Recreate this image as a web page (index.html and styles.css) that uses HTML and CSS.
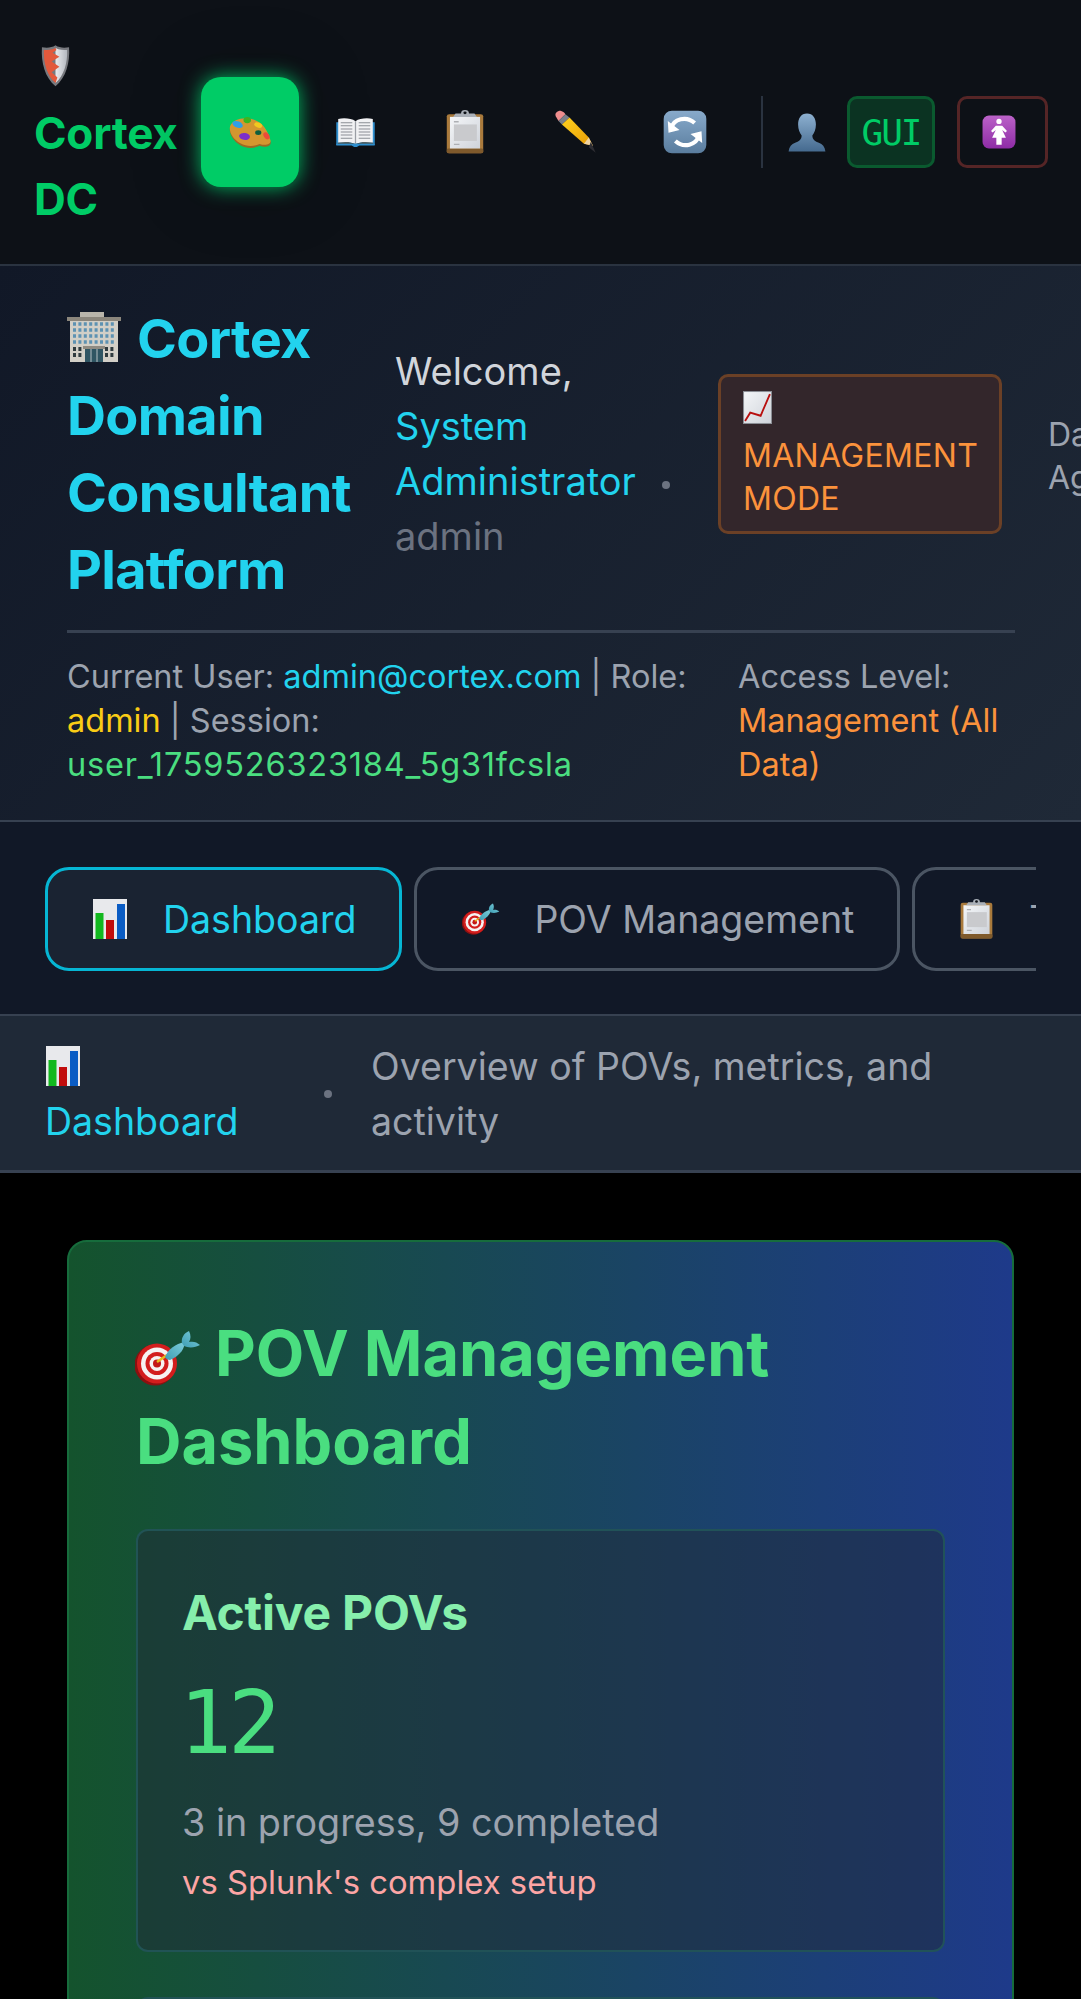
FILE: index.html
```html
<!DOCTYPE html>
<html lang="en">
<head>
<meta charset="utf-8">
<title>Cortex DC</title>
<link rel="stylesheet" href="styles.css">
</head>
<body>
<svg class="sprites" width="0" height="0" aria-hidden="true">
  <defs>
    <linearGradient id="gPaper" x1="0" y1="0" x2="1" y2="1"><stop offset="0" stop-color="#f4f6f8"/><stop offset="1" stop-color="#cfd3da"/></linearGradient>
    <linearGradient id="gSteel" x1="0" y1="0" x2="1" y2="0"><stop offset="0" stop-color="#e9ebee"/><stop offset="1" stop-color="#b4b8bf"/></linearGradient>
    <linearGradient id="gBlue" x1="0" y1="0" x2="0" y2="1"><stop offset="0" stop-color="#88aacb"/><stop offset="1" stop-color="#5a7d9e"/></linearGradient>
    <linearGradient id="gBust" x1="0" y1="0" x2="0" y2="1"><stop offset="0" stop-color="#8db0d0"/><stop offset="1" stop-color="#456a8f"/></linearGradient>
    <linearGradient id="gPurple" x1="0" y1="0" x2="0" y2="1"><stop offset="0" stop-color="#bb62c8"/><stop offset="1" stop-color="#8e2ca6"/></linearGradient>
    <linearGradient id="gPencil" x1="0" y1="0" x2="1" y2="1"><stop offset="0" stop-color="#ffd21f"/><stop offset="1" stop-color="#e79a05"/></linearGradient>
    <linearGradient id="gDart" x1="0" y1="1" x2="1" y2="0"><stop offset="0" stop-color="#3d9db4"/><stop offset="1" stop-color="#7dcdda"/></linearGradient>

    <symbol id="i-shield" viewBox="0 0 64 64" preserveAspectRatio="none">
      <path d="M32 2 C40 6 50 6 60 5 C62 28 54 50 32 63 C10 50 2 28 4 5 C14 6 24 6 32 2Z" fill="#77797e"/>
      <path d="M32 6 C40 9 48 9 56 9 C57 28 50 47 32 58Z" fill="url(#gSteel)"/>
      <path d="M32 6 C24 9 16 9 8 9 C7 28 14 47 32 58 L36 50 L24 42 L40 34 L24 26 L40 19 L26 13 L34 9Z" fill="#e2593c"/>
    </symbol>
    <symbol id="i-palette" viewBox="0 0 64 54" preserveAspectRatio="none">
      <path d="M3 20 C8 5 32 3 46 14 C56 22 60 36 62 43 C63 50 54 52 46 49 C38 53 28 54 18 48 C8 42 1 30 3 20Z" fill="#9b6a24"/>
      <path d="M3 18 C8 3 32 1 46 12 C56 20 60 34 62 41 C62 47 54 49 46 46 C38 50 28 51 18 45 C8 39 1 28 3 18Z" fill="#d4962f"/>
      <ellipse cx="14" cy="15" rx="8" ry="5" transform="rotate(25 14 15)" fill="#2f9fe6"/>
      <ellipse cx="28" cy="8" rx="5.5" ry="5" fill="#3cb520"/>
      <ellipse cx="44" cy="16" rx="6" ry="4" transform="rotate(25 44 16)" fill="#f2c81f"/>
      <ellipse cx="24" cy="34" rx="8" ry="5.5" transform="rotate(10 24 34)" fill="#7d2fc9"/>
      <ellipse cx="56" cy="33" rx="4" ry="6" transform="rotate(-30 56 33)" fill="#ed4b3a"/>
      <ellipse cx="44" cy="28" rx="4.5" ry="3.6" fill="#0d5e3d"/>
    </symbol>
    <symbol id="i-book" viewBox="0 0 64 64" preserveAspectRatio="none">
      <path d="M2 12 H31 V56 H2Z M33 12 H62 V56 H33Z" fill="#2f8fcf"/>
      <path d="M5 6 C14 3 26 5 32 10 C38 5 50 3 59 6 V52 C50 50 38 50 32 54 C26 50 14 50 5 52Z" fill="#f1f1f3"/>
      <path d="M31 10 H33 V54 H31Z" fill="#9a9da4"/>
      <path d="M9 13 H27 M9 19 H27 M9 25 H27 M9 31 H27 M9 37 H27 M9 43 H27 M37 13 H55 M37 19 H55 M37 25 H55 M37 31 H55 M37 37 H55 M37 43 H55" stroke="#8b8e95" stroke-width="2"/>
      <path d="M4 52 C14 50 26 50 32 55 C38 50 50 50 60 52 V54 H38 L34 58 H30 L26 54 H4Z" fill="#4d4a3d"/>
      <path d="M2 54 H62 V57 H38 L34 60 H30 L26 57 H2Z" fill="#2f8fcf"/>
    </symbol>
    <symbol id="i-clip" viewBox="0 0 48 64" preserveAspectRatio="none">
      <rect x="1" y="6" width="46" height="57" rx="3" fill="#a97a3c"/>
      <rect x="1" y="56" width="46" height="7" rx="2" fill="#7f5a2c"/>
      <rect x="5" y="10" width="38" height="46" fill="url(#gPaper)"/>
      <path d="M10 17 H16 M10 50 H17" stroke="#aeb0b4" stroke-width="2"/>
      <rect x="10" y="21" width="29" height="24" fill="#c9cacd"/>
      <path d="M9 10 L12 5 H19 A5 5 0 0 1 29 5 H36 L39 10Z" fill="#aab0b8"/>
      <circle cx="24" cy="4" r="2" fill="#0d1117"/>
    </symbol>
    <symbol id="i-pencil" viewBox="0 0 64 64">
      <path d="M4 9 C2 5 6 1 11 1 C15 2 17 4 18 6 L8 16Z" fill="#ee8d8d"/>
      <path d="M8 16 L18 6 L24 11 L13 21Z" fill="#7a7f88"/>
      <path d="M13 21 L24 11 L52 40 L58 52 L45 49Z" fill="url(#gPencil)"/>
      <path d="M45 49 L52 40 L58 52Z" fill="#efd3a3"/>
      <path d="M55 46 L62 62 L52 54Z" fill="#2e2e33"/>
    </symbol>
    <symbol id="i-sync" viewBox="0 0 64 64">
      <rect x="1" y="1" width="62" height="62" rx="12" fill="url(#gBlue)"/>
      <path d="M12 27 C15 13 34 8 46 19 M52 37 C49 51 30 56 18 45" fill="none" stroke="#fff" stroke-width="6"/>
      <path d="M7 16 L8 33 L24 29Z M57 48 L56 31 L40 35Z" fill="#fff"/>
    </symbol>
    <symbol id="i-bust" viewBox="0 0 64 64" preserveAspectRatio="none">
      <path d="M32 1 C42 1 47 9 47 19 C47 27 44 33 41 37 C41 44 46 47 52 49 C58 51 62 56 63 63 H1 C2 56 6 51 12 49 C18 47 23 44 23 37 C20 33 17 27 17 19 C17 9 22 1 32 1Z" fill="url(#gBust)"/>
    </symbol>
    <symbol id="i-womens" viewBox="0 0 64 64">
      <rect x="1" y="1" width="62" height="62" rx="12" fill="url(#gPurple)"/>
      <circle cx="32" cy="12" r="5" fill="#fff"/>
      <path d="M26 20 H38 L47 30 L44 33 L38 28 L45 43 H37 V56 H27 V43 H19 L26 28 L20 33 L17 30Z" fill="#fff"/>
    </symbol>
    <symbol id="i-building" viewBox="0 0 54 50">
      <rect x="13" y="0" width="24" height="6" fill="#b9b5ab"/>
      <rect x="0" y="5" width="54" height="4" fill="#8b867c"/>
      <rect x="3" y="9" width="48" height="41" fill="#d2cfc7"/>
      <path d="M6 12 H48 M6 18 H48 M6 24 H48 M6 30 H48" stroke="#5d92b3" stroke-width="3.5" stroke-dasharray="3 2.4"/>
      <path d="M6 37 H16 M38 37 H48 M6 43 H16 M38 43 H48" stroke="#2f3b3f" stroke-width="4" stroke-dasharray="3 2.4"/>
      <rect x="16" y="34" width="22" height="3" fill="#8f8b82"/>
      <rect x="18" y="37" width="18" height="13" fill="#2f5563"/>
      <path d="M24 37 V50 M30 37 V50" stroke="#b8c2c6" stroke-width="1"/>
    </symbol>
    <symbol id="i-trend" viewBox="0 0 28 32" preserveAspectRatio="none">
      <rect x=".5" y=".5" width="27" height="31" fill="url(#gPaper)" stroke="#8b8e95"/>
      <path d="M2 29 L7 21 L17 24 L26 3" fill="none" stroke="#b80f0f" stroke-width="1.8"/>
    </symbol>
    <symbol id="i-bars" viewBox="0 0 34 40">
      <rect width="34" height="40" fill="#e8e9ec"/>
      <rect x="2.500" y="14" width="8" height="26" fill="#12b81e"/>
      <rect x="13" y="21" width="8" height="19" fill="#c10c0c"/>
      <rect x="24" y="5" width="8" height="35" fill="#0a5cc4"/>
    </symbol>
    <symbol id="i-target" viewBox="0 0 66 56">
      <circle cx="20" cy="35" r="20.500" fill="#8c1010"/>
      <circle cx="22" cy="33.500" r="20" fill="#d31d1d"/>
      <circle cx="22" cy="33.500" r="16" fill="#f6f2f2"/>
      <circle cx="22" cy="33.500" r="11.500" fill="#d31d1d"/>
      <circle cx="22" cy="33.500" r="7.500" fill="#f6f2f2"/>
      <circle cx="22" cy="33.500" r="4" fill="#c41717"/>
      <path d="M22 32 L32 25" stroke="#e8b81c" stroke-width="2.500"/>
      <path d="M30 27 C33 19 41 14 49 12 C51 17 45 26 35 30 C33 30 31 29 30 27Z" fill="url(#gDart)"/>
      <path d="M47 13 C46 8 49 3 54 1 C56 5 56 9 54 12 C58 11 62 12 65 15 C60 18 53 18 49 16Z" fill="url(#gDart)"/>
    </symbol>
  </defs>
</svg>

<header class="topbar">
  <div class="brand">
    <svg class="ic ic-shield"><use href="#i-shield"/></svg>
    <span class="brand-name">Cortex DC</span>
  </div>
  <nav class="mainnav">
    <button class="navbtn navbtn-active"><svg class="ic ic-palette"><use href="#i-palette"/></svg></button>
    <button class="navbtn navbtn-book"><svg class="ic ic-book"><use href="#i-book"/></svg></button>
    <button class="navbtn"><svg class="ic ic-clip"><use href="#i-clip"/></svg></button>
    <button class="navbtn"><svg class="ic ic-pencil"><use href="#i-pencil"/></svg></button>
    <button class="navbtn"><svg class="ic ic-sync"><use href="#i-sync"/></svg></button>
  </nav>
  <div class="topbar-tools">
    <svg class="ic ic-bust"><use href="#i-bust"/></svg>
    <button class="toolbtn toolbtn-gui">GUI</button>
    <button class="toolbtn toolbtn-exit"><svg class="ic ic-womens"><use href="#i-womens"/></svg></button>
  </div>
</header>

<section class="userpanel">
  <div class="userpanel-main">
    <h1 class="platform-title"><svg class="ic ic-building"><use href="#i-building"/></svg> Cortex Domain Consultant Platform</h1>
    <div class="welcome">Welcome,<br><span class="c-cyan">System<br>Administrator</span><span class="dot dot-inline"></span><br><span class="welcome-role">admin</span></div>
    <div class="modebadge"><svg class="ic ic-trend"><use href="#i-trend"/></svg><br>MANAGEMENT MODE</div>
    <div class="clipped">Data<br>Agent</div>
  </div>
  <div class="userpanel-meta">
    <div class="meta-left">Current User: <span class="c-cyan">admin@cortex.com</span> | Role: <span class="c-yellow">admin</span> | Session: <span class="c-green c-session">user_1759526323184_5g31fcsla</span></div>
    <div class="meta-right">Access Level: <span class="c-orange">Management (All Data)</span></div>
  </div>
</section>

<section class="tabsbar">
  <div class="tabs">
    <button class="tab tab-active"><svg class="ic ic-tab"><use href="#i-bars"/></svg>Dashboard</button>
    <button class="tab"><svg class="ic ic-tabtarget"><use href="#i-target"/></svg>POV Management</button>
    <button class="tab"><svg class="ic ic-tabclip"><use href="#i-clip"/></svg>TRR Management</button>
  </div>
</section>

<section class="crumbbar">
  <div class="crumb-name"><svg class="ic ic-tab"><use href="#i-bars"/></svg><br>Dashboard</div>
  <span class="dot"></span>
  <div class="crumb-desc">Overview of POVs, metrics, and activity</div>
</section>

<main class="content">
  <section class="dash">
    <h2 class="dash-title"><svg class="ic ic-target"><use href="#i-target"/></svg> POV Management Dashboard</h2>
    <article class="stat">
      <h3 class="stat-title">Active POVs</h3>
      <div class="stat-value">12</div>
      <div class="stat-note">3 in progress, 9 completed</div>
      <div class="stat-compare">vs Splunk's complex setup</div>
    </article>
    <article class="stat">
      <h3 class="stat-title">Win Rate</h3>
    </article>
  </section>
</main>
</body>
</html>
```

FILE: styles.css
```css
* { box-sizing: border-box; }
html, body { margin: 0; height: 1999px; overflow: hidden; background: #000; }
body { font-family: Inter, "Liberation Sans", sans-serif; color: #e5e7eb; }
button { font-family: inherit; cursor: pointer; }
.sprites { position: absolute; }
.ic { display: inline-block; vertical-align: middle; flex: none; }

.topbar { height: 266px; background: #0d1117; border-bottom: 2px solid #2a3340; display: flex; align-items: center; padding: 0 33px 0 34px; }
.brand { width: 167px; flex: none; display: flex; flex-direction: column; align-items: flex-start; padding-top: 12px; }
.brand-name { font-size: 44px; font-weight: 700; line-height: 66px; color: #00cc66; letter-spacing: -.2px; }
.ic-shield { width: 31px; height: 43px; margin: 0 0 13px 6px; }
.mainnav { display: flex; align-items: center; width: 560px; flex: none; }
.navbtn { width: 110px; height: 110px; flex: none; background: none; border: 0; border-radius: 20px; padding: 0; display: flex; align-items: center; justify-content: center; }
.navbtn-active { width: 98px; background: #00cc66; box-shadow: 0 0 20px rgba(0,230,120,.8), 0 0 70px rgba(0,0,0,.3); margin-right: 1px; }
.ic-palette { width: 44px; height: 34px; }
.ic-book { width: 41px; height: 33px; }
.ic-clip { width: 38px; height: 44px; }
.ic-pencil { width: 44px; height: 44px; }
.ic-sync { width: 44px; height: 44px; }
.topbar-tools { display: flex; align-items: center; flex: 1; height: 72px; border-left: 2px solid #2a3340; padding-left: 25px; }
.ic-bust { width: 38px; height: 39px; margin-right: 21px; }
.toolbtn { height: 72px; border-radius: 10px; padding: 0; display: flex; align-items: center; justify-content: center; }
.toolbtn-gui { width: 88px; background: #0b3322; border: 3px solid #0a5a2f; color: #00cc66; font-family: "DejaVu Sans Mono", monospace; font-size: 36px; letter-spacing: -2px; }
.toolbtn-exit { width: 91px; margin-left: 22px; background: none; border: 3px solid #552526; padding-right: 8px; }
.ic-womens { width: 34px; height: 34px; }

.userpanel { height: 556px; background: linear-gradient(135deg, #111827, #1f2937); border-bottom: 2px solid #374151; padding: 34px 0 0 67px; overflow: hidden; }
.userpanel-main { display: flex; align-items: center; width: 1100px; padding-bottom: 22px; }
.platform-title { width: 300px; flex: none; margin: 0 28px 0 0; font-size: 54px; line-height: 77px; font-weight: 700; color: #22d3ee; letter-spacing: -.7px; }
.ic-building { width: 54px; height: 50px; vertical-align: -4px; margin-right: 4px; }
.welcome { width: 323px; flex: none; font-size: 38px; line-height: 55px; color: #d1d5db; }
.welcome-role { color: #6b7280; }
.dot { width: 8px; height: 8px; border-radius: 50%; background: #6b7280; flex: none; display: block; }
.dot-inline { display: inline-block; vertical-align: middle; margin-left: 26px; }
.c-cyan { color: #22d3ee; }
.c-yellow { color: #facc15; }
.c-green { color: #4ade80; }
.c-orange { color: #fb923c; }
.c-session { letter-spacing: .8px; }
.modebadge { width: 284px; flex: none; height: 160px; background: #33262b; border: 3px solid #6b4026; border-radius: 10px; padding: 14px 22px; color: #fb923c; font-size: 32px; line-height: 43px; letter-spacing: .3px; }
.ic-trend { width: 29px; height: 33px; vertical-align: top; }
.clipped { margin: 4px 0 0 46px; color: #9ca3af; font-size: 32px; line-height: 43px; }
.userpanel-meta { width: 948px; border-top: 3px solid #374151; padding-top: 22px; display: flex; font-size: 32.5px; line-height: 44px; color: #9ca3af; }
.meta-left { width: 671px; flex: none; }
.meta-right { flex: 1; }

.tabsbar { height: 194px; background: #111827; border-bottom: 2px solid #374151; padding: 45px 45px 0; }
.tabs { display: flex; gap: 12px; overflow: hidden; }
.tab { flex: none; height: 104px; background: none; border: 3px solid #4b5563; border-radius: 24px; color: #9ca3af; font-size: 37.5px; padding: 0 43px 0 45px; display: flex; align-items: center; gap: 36px; }
.tab-active { background: #1a2332; border-color: #06b6d4; color: #22d3ee; }
.ic-tab { width: 34px; height: 40px; }
.ic-tabtarget { width: 38px; height: 32px; margin-right: -2px; }
.ic-tabclip { width: 33px; height: 40px; }

.crumbbar { height: 157px; background: #1f2937; border-bottom: 3px solid #374151; display: flex; align-items: center; padding: 2px 45px 0; font-size: 37.5px; line-height: 55px; }
.crumb-name { color: #22d3ee; width: 279px; flex: none; }
.crumb-name .ic { vertical-align: top; margin: 7px 0 0 1px; }
.crumb-desc { color: #9ca3af; margin-left: 39px; }

.content { padding: 67px; }
.dash { border: 2px solid #166c3c; border-radius: 20px; background: linear-gradient(90deg, #14532d, #1e3a8a); padding: 67px; }
.dash-title { margin: 0 0 44px; font-size: 63px; line-height: 88px; font-weight: 700; color: #4ade80; }
.ic-target { width: 66px; height: 56px; vertical-align: -10px; margin: 0 -1px 0 -1px; }
.stat { border: 2px solid rgba(34,85,90,.9); border-radius: 12px; background: rgba(31,41,55,.5); padding: 52px 44px; margin-bottom: 45px; height: 423px; }
.stat-title { margin: 0; font-size: 48px; line-height: 60px; font-weight: 700; color: #86efac; letter-spacing: -.2px; }
.stat-value { font-family: "DejaVu Sans Mono", monospace; font-size: 88px; line-height: 120px; color: #4ade80; margin: 20px 0 0 -3px; letter-spacing: -4px; }
.stat-note { font-size: 37.7px; line-height: 60px; color: #9ca3af; margin-top: 9px; }
.stat-compare { font-size: 32.8px; line-height: 50px; color: #fca5a5; margin-top: 5px; }
```
